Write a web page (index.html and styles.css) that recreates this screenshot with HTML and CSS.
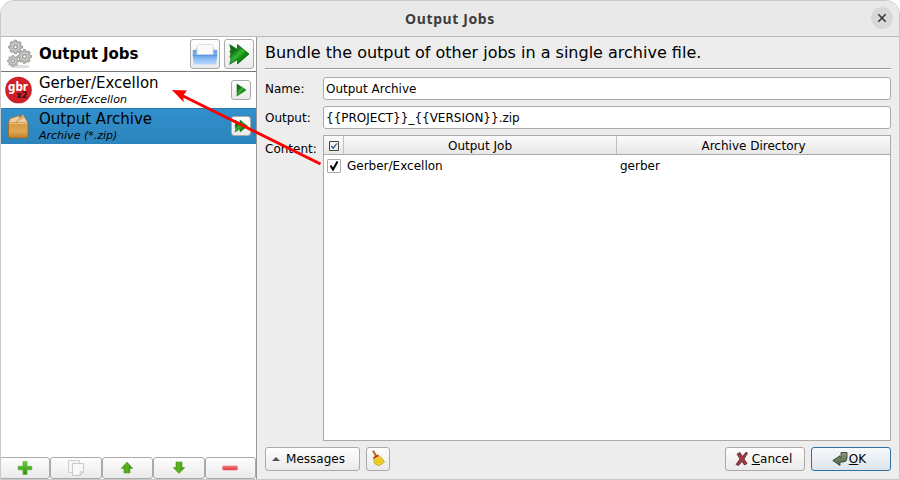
FILE: index.html
```html
<!DOCTYPE html>
<html lang="en">
<head>
<meta charset="utf-8">
<title>Output Jobs</title>
<link rel="stylesheet" href="styles.css">
</head>
<body>
<svg class="defs" width="0" height="0" aria-hidden="true">
  <defs>
    <linearGradient id="green" x1="0" y1="0" x2=".9" y2="1"><stop offset="0" stop-color="#0a6a0a"/><stop offset=".3" stop-color="#12721a"/><stop offset=".5" stop-color="#35b530"/><stop offset=".65" stop-color="#0f8a12"/><stop offset="1" stop-color="#087008"/></linearGradient>
    <linearGradient id="lime" x1="0" y1="0" x2="0" y2="1"><stop offset="0" stop-color="#70cf43"/><stop offset="1" stop-color="#28920a"/></linearGradient>
    <linearGradient id="arrowgreen" x1="0" y1="0" x2="1" y2="0"><stop offset="0" stop-color="#43901b"/><stop offset=".5" stop-color="#5bb71f"/><stop offset="1" stop-color="#358011"/></linearGradient>
    <linearGradient id="tray" x1="0" y1="0" x2="0" y2="1"><stop offset="0" stop-color="#6c9fe0"/><stop offset=".45" stop-color="#76aeef"/><stop offset="1" stop-color="#b9daff"/></linearGradient>
    <linearGradient id="box" x1="0" y1="0" x2="0" y2="1"><stop offset="0" stop-color="#d49a45"/><stop offset=".6" stop-color="#dfa753"/><stop offset="1" stop-color="#bd7e2b"/></linearGradient>
    <linearGradient id="redbar" x1="0" y1="0" x2="0" y2="1"><stop offset="0" stop-color="#f47c7c"/><stop offset="1" stop-color="#e12d35"/></linearGradient>
    <linearGradient id="olive" x1="0" y1="0" x2="0" y2="1"><stop offset="0" stop-color="#8a9b78"/><stop offset="1" stop-color="#4f663f"/></linearGradient>
    <g id="gear">
      <path d="M-1.300-7.200h2.600l.5 2 1.500.7 1.900-1 1.800 1.900-1 1.900.5 1.200 2 .6v2.400l-2 .5-.7 1.500 1 1.900L4.900 8.100 3 7l-1.200.5-.5 1.900h-2.600l-.5-2L-3 6.900l-1.900 1.200-1.800-1.900 1-1.900L-6.300 3l-2-.5V.100l2-.6.7-1.500-1.100-1.700 1.800-1.900 1.900 1 1.200-.6z" transform="scale(.92) translate(0 -1.200)" fill="#b9b9b6" stroke="#7f7f7f" stroke-width=".8"/>
      <circle r="3.600" fill="none" stroke="#d2d2d0" stroke-width="1"/>
      <circle r="2" fill="#fafafa" stroke="#757575" stroke-width=".9"/>
    </g>
  </defs>
</svg>
<div class="window">
  <header class="titlebar">
    <span class="caption">Output Jobs</span>
    <button class="close" aria-label="Close"><svg width="22" height="22" viewBox="0 0 22 22"><path d="M7.300 7.300l7.400 7.400M14.700 7.300l-7.400 7.400" stroke="#333" stroke-width="1.500"/></svg></button>
  </header>
  <div class="body">
    <aside class="side">
      <div class="side-head">
        <svg class="gears" width="28" height="30" viewBox="0 0 28 30">
          <ellipse cx="14" cy="27.500" rx="10" ry="1.800" fill="#ddd"/>
          <use href="#gear" transform="translate(9.500 8) scale(.9)"/>
          <use href="#gear" transform="translate(18.500 17.500) scale(.9)"/>
          <use href="#gear" transform="translate(7 22) scale(.72)"/>
        </svg>
        <h1 class="side-title">Output Jobs</h1>
        <button class="btn tool" aria-label="Open folder"><svg width="28" height="28" viewBox="0 0 28 28">
          <path d="M4 8.500h20v6H4z" fill="#c3d6ee"/>
          <path d="M6.500 5.500l1-1h13l1.500 1V16h-16z" fill="#fafafa" stroke="#d2d2d2" stroke-width=".7"/>
          <path d="M1.800 10h3.600v4.500h17.200V10h3.600v6l-1 8.500H2.800l-1-8.500z" fill="url(#tray)"/>
          <path d="M1.800 15h24.400v1.300H1.800z" fill="#5f97de"/>
        </svg></button>
        <button class="btn tool" aria-label="Run all"><svg width="28" height="28" viewBox="0 0 28 28">
          <path d="M4.800 4.800l7.700 4.700V4.500L24 14 12.500 24v-4.500l-7.700 4.700 1.200-5.200-1-2.500 1-2.500-1-2.500 1-2z" fill="url(#green)" stroke="#13630f" stroke-width=".8"/>
        </svg></button>
      </div>
      <div class="job">
        <svg class="job-icon" width="28" height="28" viewBox="0 0 28 28">
          <circle cx="14.500" cy="14" r="13.300" fill="#cf1f28"/>
          <text class="gbr"><tspan x="4" y="14.800" textLength="20" lengthAdjust="spacingAndGlyphs">gbr</tspan><tspan class="xz" x="12.500" y="21.500">x2</tspan></text>
        </svg>
        <div class="job-text"><div class="job-name">Gerber/Excellon</div><div class="job-type">Gerber/Excellon</div></div>
        <button class="btn run" aria-label="Run"><svg width="18" height="18" viewBox="0 0 18 18"><path d="M5 3l9 6-9 6z" fill="url(#green)" stroke="#17721a" stroke-width=".6"/></svg></button>
      </div>
      <div class="job selected">
        <svg class="job-icon" width="28" height="28" viewBox="0 0 28 28">
          <path d="M4.500 10.500H24V25l-1 1H5.500l-1-1z" fill="url(#box)" stroke="#9a6420" stroke-width=".8"/>
          <path d="M4.500 10.500L6 6.500l9-3 1 2L19 2l2 3.500 3 5z" fill="#d9b07a" stroke="#9d7035" stroke-width=".6"/>
          <path d="M5 10.500L7 7l8-2.500-3.500 6zM12.500 10.500L20 6l3.500 4.500z" fill="#edcfa0"/>
          <path d="M5.300 11.500h17.900" stroke="#edc07a"/>
        </svg>
        <div class="job-text"><div class="job-name">Output Archive</div><div class="job-type">Archive (*.zip)</div></div>
        <button class="btn run" aria-label="Run"><svg width="18" height="18" viewBox="0 0 18 18"><path d="M3 3l5 3.200V3l7.500 6L8 15v-3.200L3 15l.8-3L3 9l.8-3z" fill="url(#green)" stroke="#17721a" stroke-width=".6"/></svg></button>
      </div>
      <div class="side-foot">
        <button class="btn foot" aria-label="Add"><svg width="16" height="16" viewBox="0 0 16 16"><path d="M6 1.500h4v4.700h4.800v3.600H10v4.700H6V9.800H1.200V6.200H6z" fill="url(#lime)" stroke="#5daf3a" stroke-width=".7"/></svg></button>
        <button class="btn foot" aria-label="Copy"><svg width="18" height="18" viewBox="0 0 18 18"><path d="M1.500 1.500h11v12h-11z" fill="#f5f5f5" stroke="#d0d0d0"/><path d="M5.500 4.500h11v8.500l-3.500 3.500H5.500z" fill="#f8f8f8" stroke="#cacaca"/><path d="M12.500 16.500q1.500-1.500.5-4 2 1 3.500.5z" fill="#fff" stroke="#bbb" stroke-width=".8"/></svg></button>
        <button class="btn foot" aria-label="Move up"><svg width="16" height="16" viewBox="0 0 16 16"><path d="M8 2l5.800 6.500H11V13H5V8.500H2.200z" fill="url(#arrowgreen)" stroke="#4f9a28" stroke-width=".6"/></svg></button>
        <button class="btn foot" aria-label="Move down"><svg width="16" height="16" viewBox="0 0 16 16"><path d="M8 13.500L2.200 7.500H5V2h6v5.500h2.800z" fill="url(#arrowgreen)" stroke="#4f9a28" stroke-width=".6"/></svg></button>
        <button class="btn foot" aria-label="Remove"><svg width="16" height="16" viewBox="0 0 16 16"><rect x=".7" y="6" width="14.600" height="4" rx=".6" fill="url(#redbar)" stroke="#e77a7d" stroke-width=".7"/></svg></button>
      </div>
    </aside>
    <main class="main">
      <div class="intro"><span class="intro-text">Bundle the output of other jobs in a single archive file.</span></div>
      <div class="form">
        <label class="label" for="name">Name:</label><div class="field" id="name">Output Archive</div>
        <label class="label" for="output">Output:</label><div class="field" id="output"><span class="pattern">{{PROJECT}}_{{VERSION}}.zip</span></div>
        <span class="label label-top">Content:</span>
        <div class="table">
          <div class="row head">
            <div class="cell"><svg width="10" height="10" viewBox="0 0 10 10"><path d="M.5.500h9v9h-9z" fill="none" stroke="#444"/><path d="M2.300 5l1.900 2.200L7.800 2.500" fill="none" stroke="#245385" stroke-width="1.200"/></svg></div>
            <div class="cell">Output Job</div>
            <div class="cell">Archive Directory</div>
          </div>
          <div class="row">
            <div class="check"><svg width="12" height="12" viewBox="0 0 12 12"><path d="M2.500 5.500l2.500 4L9.500 1.500" fill="none" stroke="#000" stroke-width="2"/></svg></div>
            <div class="data">Gerber/Excellon</div>
            <div class="data">gerber</div>
          </div>
        </div>
      </div>
      <div class="actions">
        <button class="btn messages"><svg width="8" height="4" viewBox="0 0 8 4"><path d="M0 4L4 0l4 4z" fill="#555"/></svg>Messages</button>
        <button class="btn broom" aria-label="Clear"><svg width="18" height="18" viewBox="0 0 18 18">
          <path d="M4.500 1.500l2.500 4.500" stroke="#bf7427" stroke-width="2.400" stroke-linecap="round"/>
          <path d="M4.500 8.500L9.500 5.500q4 2 6 6.500l-1.500 1-1 1.200-1.500.2-1.500 1.300-4.500-2z" fill="#edd32c" stroke="#c09b13" stroke-width=".7"/>
          <path d="M7 10l1.500 3.500M10 9l2 3.500" stroke="#cdab16" stroke-width=".6"/>
          <path d="M4.500 8l5-2.700" stroke="#c62d22" stroke-width="1.800"/>
        </svg></button>
        <span class="spacer"></span>
        <button class="btn dialog"><svg width="14" height="16" viewBox="0 0 14 16"><path d="M2 3l3-1.500 2.500 4L11 1.200l1.500 1L9 8l3 4.500-2.500 1.500L7 10.500l-3.500 4L1 13.500 5 8z" fill="#a9383f" stroke="#54272c" stroke-width=".8"/></svg><span class="cap"><u>C</u>ancel</span></button>
        <button class="btn dialog primary"><svg width="16" height="16" viewBox="0 0 16 16"><path d="M9 1.500h6V7q0 4-4 4H8v3.500L.8 9.500 8 4.800V7h1z" fill="url(#olive)" stroke="#394631" stroke-width=".9"/></svg><span class="cap"><u>O</u>K</span></button>
      </div>
    </main>
  </div>
  <svg class="pointer" width="160" height="84" viewBox="0 0 160 84"><path d="M149.500 79L9 9.500" stroke="#f00" stroke-width="3"/><path d="M1 5l15 .5-4 5.200.8 6.500z" fill="#f00"/></svg>
</div>
</body>
</html>
```
FILE: styles.css
```css
* { box-sizing: border-box; }
body { margin: 0; background: #fff; color: #000; font: 12px/16px "DejaVu Sans", sans-serif; }
button { font: inherit; color: inherit; padding: 0; }
svg { display: block; flex: none; }
.defs { position: absolute; }
.window { position: relative; width: 900px; height: 480px; border: 1px solid #c9c9c9; border-radius: 14px 14px 0 0; background: #ededed; overflow: hidden; display: flex; flex-direction: column; }
.titlebar { height: 36px; flex: none; background: #e9e9e9; border-bottom: 1px solid #b9b9b9; display: grid; grid-template-columns: 1fr auto 1fr; align-items: center; padding-right: 6px; }
.caption { grid-column: 2; font: bold 14px/18px "Noto Sans", sans-serif; letter-spacing: .6px; color: #3d3d3d; padding-left: 6px; }
.close { justify-self: end; width: 22px; height: 22px; border: 0; border-radius: 50%; background: #d8d8d8; margin-top: -1px; }
.body { flex: 1; min-height: 0; display: flex; }
.side { width: 256px; flex: none; background: #fff; border-right: 1px solid #999; display: flex; flex-direction: column; }
.side-head { height: 35px; border-bottom: 1px solid #777; display: flex; align-items: center; padding: 0 2px 0 5px; }
.side-title { margin: 0 auto 0 5px; font-size: 15px; line-height: 20px; letter-spacing: -.05px; }
.btn { border: 1px solid #aaa; border-radius: 3px; background: linear-gradient(#fefefe, #eaeaea); display: flex; align-items: center; justify-content: center; }
.tool { width: 30px; height: 30px; margin-left: 4px; }
.job { height: 36px; display: flex; align-items: center; padding: 0 5px 0 3px; }
.selected { background: linear-gradient(#3190cc, #2c84bd); box-shadow: inset 0 1px #297bb0; }
.job-text { flex: 1; margin-left: 7px; }
.job-name { font-size: 15px; line-height: 19px; }
.job-type { font-size: 11px; line-height: 14px; font-style: italic; }
.run { width: 20px; height: 20px; }
.gbr { font: bold 12px "DejaVu Sans", sans-serif; fill: #fff; }
.xz { font-size: 8px; fill: #351017; }
.side-foot { margin-top: auto; display: grid; grid-template-columns: repeat(5, 1fr); margin-left: -2px; }
.foot { height: 22px; }
.main { flex: 1; min-width: 0; display: flex; flex-direction: column; padding: 0 8px 8px; }
.intro { height: 32px; flex: none; border-bottom: 1px solid #999; box-shadow: 0 1px #fff; display: flex; align-items: center; font-size: 16px; }
.form { flex: 1; display: grid; grid-template-columns: 50px 1fr; grid-template-rows: 23px 23px 1fr; gap: 6px 8px; padding-top: 8px; }
.label { align-self: center; white-space: nowrap; }
.label-top { align-self: start; padding-top: 6px; }
.field { background: #fff; border: 1px solid #aaa; border-radius: 3px; padding: 3px 2px; }
.table { background: #fff; border: 1px solid #aaa; }
.row { display: grid; grid-template-columns: 20px 273px 1fr; align-items: center; height: 22px; }
.head { height: 19px; background: linear-gradient(#fbfbfb, #e7e7e7); border-bottom: 1px solid #aaa; }
.cell { height: 18px; display: flex; align-items: center; justify-content: center; border-right: 1px solid #c0c0c0; padding-top: 1px; }
.cell:last-child { border-right: 0; }
.check { width: 14px; height: 14px; border: 1px solid #aaa; border-radius: 1px; margin: -1px 0 0 3px; }
.data { padding-left: 3px; }
.actions { display: flex; gap: 6px; padding-top: 6px; }
.actions .btn { height: 24px; }
.messages { width: 95px; gap: 6px; padding-right: 8px; }
.broom { width: 24px; }
.spacer { flex: 1; }
.dialog { width: 80px; gap: 3px; padding-right: 3px; }
.primary { border-color: #2c72a5; background: linear-gradient(#f7f9fb, #dce4eb); gap: 1px; padding-right: 4px; }
.pointer { position: absolute; left: 170px; top: 84px; }
```
